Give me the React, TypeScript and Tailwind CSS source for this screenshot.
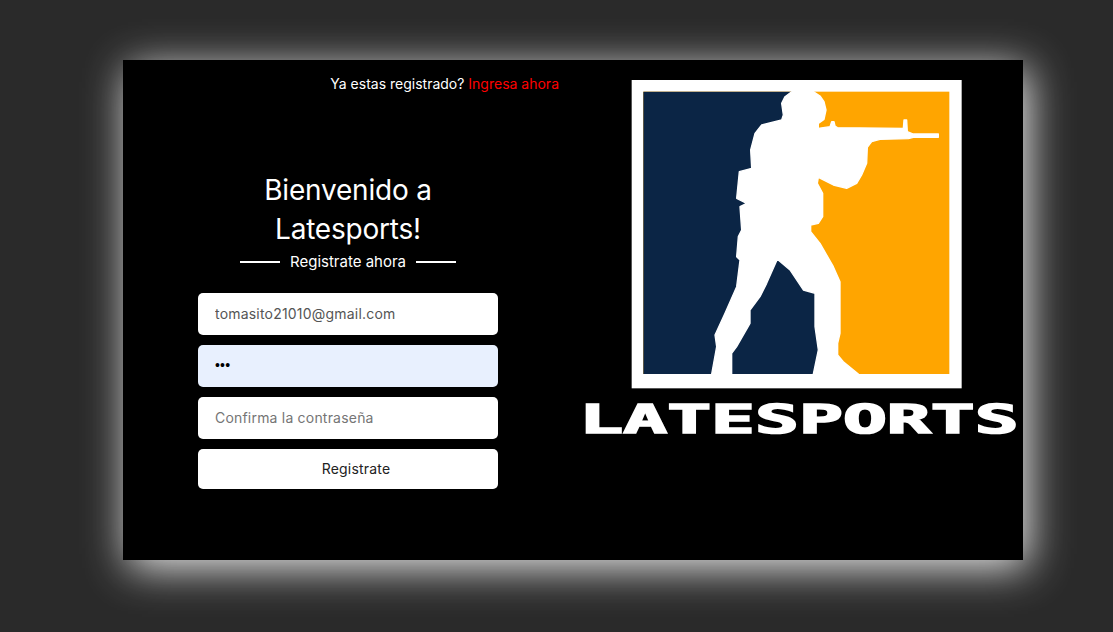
const FONT = "font-['Inter','Noto_Sans',sans-serif]";

function Logo() {
  return (
    <svg viewBox="9 0 1350 1170" className="block h-[390px] w-[450px] blur-[0.4px]">
      <rect x="185" y="60" width="990" height="925" fill="#ffffff" />
      <rect x="220" y="95" width="918" height="847" fill="#ffa500" />
      <path d="M220 95H700V600L770 650V942H220Z" fill="#0b2545" />
      {/* soldier */}
      <path
        fill="#ffffff"
        stroke="#ffffff"
        strokeWidth="4"
        strokeLinejoin="round"
        d="M665 95L730 95L750 108L762 125L768 150L762 178L745 190L745 205L780 200L785 185L792 185L795 198L802 203L1000 205L1002 180L1010 180L1012 215L1030 222L1105 222L1105 232L1030 232L1015 236L930 238L905 245L892 262L890 310L875 345L860 370L830 385L790 375L745 352L742 370L758 400L758 470L745 490L722 495L722 515L750 550L790 620L810 665L810 820L803 850L803 885L820 905L865 942L730 942L745 870L735 800L735 700L700 690L660 630L622 598L590 670L570 710L540 750L540 790L500 860L485 880L485 942L425 942L440 860L435 825L465 760L500 680L510 600L500 590L505 530L515 510L510 440L530 430L500 415L508 335L545 325L542 270L555 220L575 195L635 180L640 165L635 130L645 110Z"
      />
      <text
        x="28"
        y="1120"
        textLength="1318"
        lengthAdjust="spacingAndGlyphs"
        fontSize="118"
        fontWeight="700"
        fill="#ffffff"
        stroke="#ffffff"
        strokeWidth="5"
        className="font-['DejaVu_Sans_Mono',monospace]"
      >
        LATESPORTS
      </text>
    </svg>
  );
}

function Field({ type, value, placeholder, filled }: { type: string; value?: string; placeholder?: string; filled?: boolean }) {
  return (
    <input
      type={type}
      defaultValue={value}
      placeholder={placeholder}
      readOnly
      className={`h-[42px] w-[300px] rounded-[5px] pb-[2px] pl-[17px] text-[14px] tracking-[0.2px] outline-none placeholder:text-[#757575] ${
        filled ? "bg-[#e8f0fe] font-['Liberation_Sans',sans-serif] text-black" : 'bg-white text-[#555555]'
      }`}
    />
  );
}

export default function App() {
  return (
    <div className={`min-h-[632px] bg-[#2a2a2a] pl-[123px] pt-[60px] ${FONT}`}>
      <div className="flex h-[500px] w-[900px] bg-black shadow-[5px_8px_40px_rgba(255,255,255,0.9)]">
        {/* Form */}
        <div className="flex w-[450px] flex-col">
          <p className="mt-[14px] pr-[14px] text-right text-[14px] leading-[20px] text-white">
            Ya estas registrado? <a className="text-[#ff0000]">Ingresa ahora</a>
          </p>
          <h1 className="mt-[77px] text-center text-[28px] leading-[39px] tracking-[-0.2px] text-white">
            Bienvenido a
            <br />
            Latesports!
          </h1>
          <div className="mt-[3px] flex items-center justify-center gap-[9px] text-[15px] leading-[20px] text-white">
            <span className="h-[2px] w-[40px] bg-white" />
            <span className="w-[118px] text-center whitespace-nowrap">Registrate ahora</span>
            <span className="h-[2px] w-[40px] bg-white" />
          </div>
          <form className="mt-[21px] flex flex-col items-center gap-[10px]">
            <Field type="email" value="tomasito21010@gmail.com" />
            <Field type="password" value="123" filled />
            <Field type="password" placeholder="Confirma la contraseña" />
            <button type="button" className="h-[40px] w-[300px] rounded-[5px] bg-white pb-[2px] pl-[16px] text-[14px] tracking-[0.2px] text-[#222222]">
              Registrate
            </button>
          </form>
        </div>
        {/* Logo */}
        <div className="w-[450px]">
          <Logo />
        </div>
      </div>
    </div>
  );
}
